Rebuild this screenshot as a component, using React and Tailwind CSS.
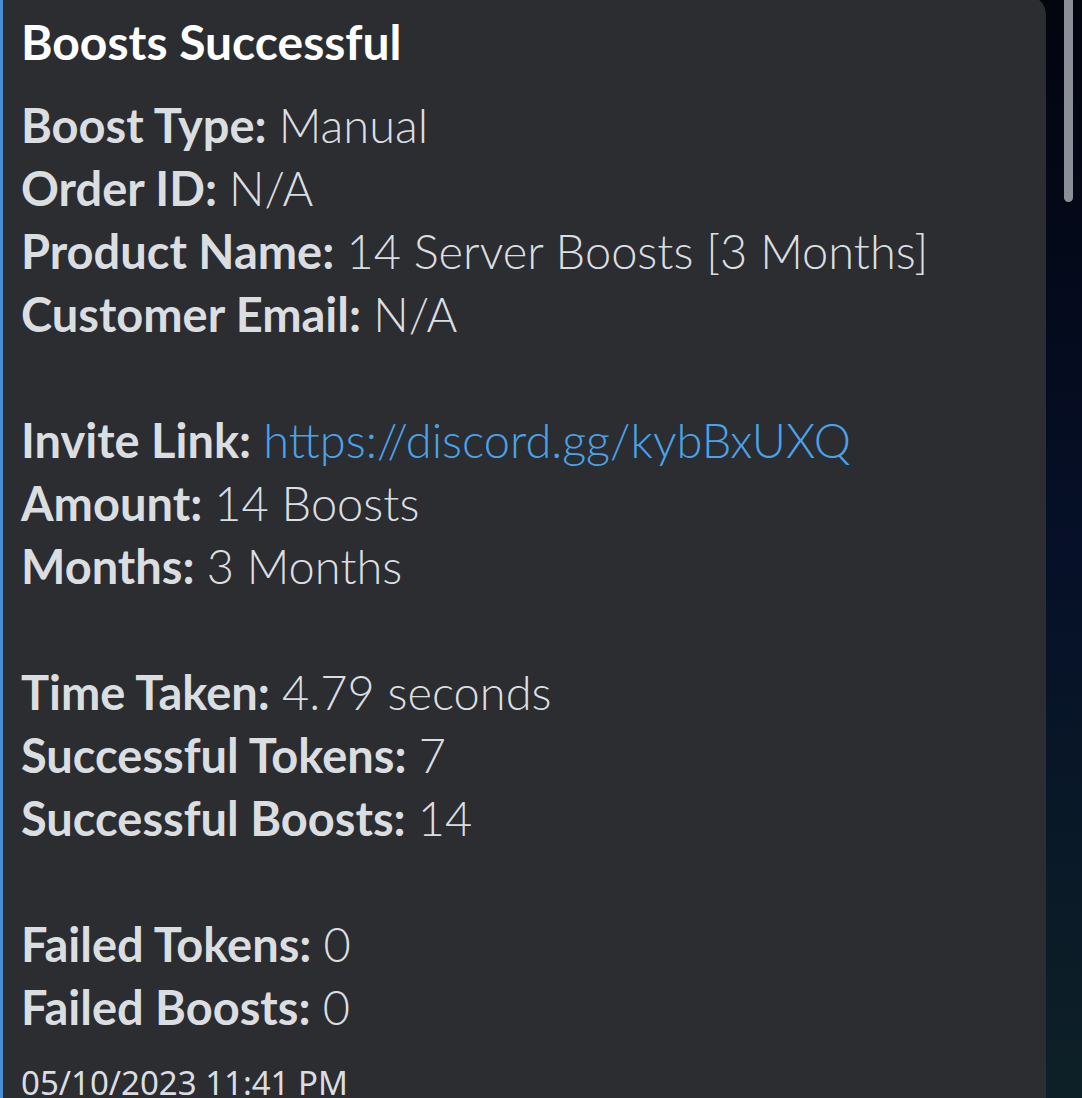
import React from "react";

const Row = ({ label, value, link }) => (
  <div className="h-[63px] leading-[63px] whitespace-nowrap">
    <span className="font-bold text-[#dbdee1]">{label}</span>{" "}
    <span className={link ? "font-light text-[#4aa3ea]" : "font-light text-[#dbdee1]"}>{value}</span>
  </div>
);

const Blank = () => <div className="h-[63px]" />;

export default function App() {
  return (
    <div
      className="flex w-[1082px] h-[1098px] overflow-hidden bg-gradient-to-b from-[#03050f] via-[#061028] to-[#0e2027]"
      style={{ fontFamily: "Lato, 'Noto Sans', sans-serif" }}
    >
      <div className="w-[1046px] shrink-0 -mt-[5px] h-[1120px] bg-[#2b2d31] rounded-tr-[20px] border-l-[3px] border-[#4a8fd6] pl-[18px] pt-[15px] text-[47px]">
        <div className="h-[63px] leading-[63px] font-bold text-white text-[48px] whitespace-nowrap">Boosts Successful</div>
        <div className="h-[21px]" />
        <Row label="Boost Type:" value="Manual" />
        <Row label="Order ID:" value="N/A" />
        <Row label="Product Name:" value="14 Server Boosts [3 Months]" />
        <Row label="Customer Email:" value="N/A" />
        <Blank />
        <Row label="Invite Link:" value="https://discord.gg/kybBxUXQ" link />
        <Row label="Amount:" value="14 Boosts" />
        <Row label="Months:" value="3 Months" />
        <Blank />
        <Row label="Time Taken:" value="4.79 seconds" />
        <Row label="Successful Tokens:" value="7" />
        <Row label="Successful Boosts:" value="14" />
        <Blank />
        <Row label="Failed Tokens:" value="0" />
        <Row label="Failed Boosts:" value="0" />
        <div className="mt-[22px] text-[33px] leading-[44px] text-[#dbdee1] font-normal whitespace-nowrap" style={{ fontFamily: "'Noto Sans', sans-serif" }}>
          05/10/2023 11:41 PM
        </div>
      </div>
      <div className="flex-1 pl-[18px]">
        <div className="w-[9px] h-[202px] bg-[#8c8f98] rounded-b-full" />
      </div>
    </div>
  );
}
